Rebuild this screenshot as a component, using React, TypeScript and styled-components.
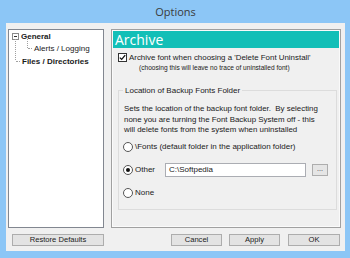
import React from 'react'
import styled, { createGlobalStyle } from 'styled-components'

const Global = createGlobalStyle`
  html, body { margin: 0; padding: 0; }
  body { font-family: "Liberation Sans", Arial, sans-serif; color: #1a1a1a; }
`

const Window = styled.div`
  width: 350px;
  height: 258px;
  box-sizing: border-box;
  background: #8cc6f6;
  padding: 0 5px 7px 6px;
  display: flex;
  flex-direction: column;
`

const TitleBar = styled.div`
  height: 22px;
  display: flex;
  align-items: center;
  justify-content: center;
  font-family: "Open Sans", "Liberation Sans", sans-serif;
  font-size: 11px;
  color: #3a3a3a;
  padding-bottom: 1px;
`

const Client = styled.div`
  flex: 1;
  background: #f0f0f0;
  padding: 6px 4px 0 2px;
  display: flex;
  flex-direction: column;
`

const Main = styled.div`
  display: flex;
  gap: 7px;
  height: 199px;
`

const Tree = styled.div`
  width: 96px;
  box-sizing: border-box;
  background: #fff;
  border: 1px solid #828790;
  padding: 0 0 0 3px;
  position: relative;
`

const TreeRow = styled.div<{ $indent: number; $bold?: boolean }>`
  display: flex;
  align-items: center;
  height: 12.5px;
  padding-left: ${p => p.$indent}px;
  font-size: 8px;
  font-weight: ${p => (p.$bold ? 700 : 400)};
  white-space: nowrap;
  &:first-of-type {
    margin-top: -1px;
  }
`

const Expander = styled.span`
  width: 7px;
  height: 7px;
  box-sizing: border-box;
  border: 1px solid #8a8a8a;
  margin-right: 2px;
  display: flex;
  align-items: center;
  justify-content: center;
  &::after {
    content: '';
    width: 3px;
    height: 1px;
    background: #333;
  }
`

const Connector = styled.span<{ $w: number }>`
  width: ${p => p.$w}px;
  height: 0;
  border-top: 1px dotted #a0a0a0;
  margin-right: 2px;
  flex: none;
`

const TreeLine = styled.div`
  position: absolute;
  left: 6px;
  top: 8.5px;
  height: 21px;
  border-left: 1px dotted #a0a0a0;
`

const SubLine = styled.div`
  position: absolute;
  left: 18px;
  top: 9px;
  height: 9px;
  border-left: 1px dotted #a0a0a0;
`

const Panel = styled.div`
  width: 230px;
  box-sizing: border-box;
  border: 1px solid #a0a0a0;
  box-shadow: inset 0 0 0 1px #fafafa;
  display: flex;
  flex-direction: column;
`

const Header = styled.div`
  height: 17px;
  margin: 1px 1px 0 1px;
  background: #12bfb7;
  color: #fff;
  font-family: "Open Sans", "Liberation Sans", sans-serif;
  font-size: 14px;
  line-height: 17px;
  padding-left: 2px;
`

const Body = styled.div`
  padding: 4px 3px 0 6px;
  display: flex;
  flex-direction: column;
`

const CheckRow = styled.div`
  display: flex;
  align-items: center;
  gap: 2px;
  font-size: 7.9px;
  height: 11px;
`

const Box = styled.span`
  width: 9px;
  height: 9px;
  box-sizing: border-box;
  border: 1px solid #333;
  background: #fff;
  display: flex;
  align-items: center;
  justify-content: center;
`

const Note = styled.div`
  font-size: 6.6px;
  padding-left: 21px;
  margin-top: 1px;
`

const Group = styled.fieldset`
  margin: 15px 0 0 0;
  padding: 9px 6px 14px 5px;
  border: 1px solid #dcdcdc;
  border-radius: 0;
  height: 124px;
  box-sizing: border-box;
`

const Legend = styled.legend`
  font-size: 8px;
  padding: 0 2px;
  margin-left: -1px;
`

const Desc = styled.div`
  font-size: 7.9px;
  line-height: 10.5px;
`

const Options = styled.div`
  display: flex;
  flex-direction: column;
  gap: 9px;
  margin-top: 4px;
`

const RadioRow = styled.div`
  display: flex;
  align-items: center;
  height: 14px;
  font-size: 8px;
`

const Radio = styled.span<{ $on?: boolean }>`
  width: 10px;
  height: 10px;
  box-sizing: border-box;
  border: 1px solid #555;
  border-radius: 50%;
  background: #fff;
  margin: 0 2px 0 -1px;
  flex: none;
  display: flex;
  align-items: center;
  justify-content: center;
  &::after {
    content: '';
    width: 4px;
    height: 4px;
    border-radius: 50%;
    background: ${p => (p.$on ? '#111' : 'transparent')};
  }
`

const OtherLabel = styled.span`
  width: 30px;
`

const PathInput = styled.div`
  width: 141px;
  height: 14px;
  box-sizing: border-box;
  border: 1px solid #abadb3;
  background: #fff;
  font-size: 8px;
  line-height: 12px;
  padding-left: 3px;
`

const Browse = styled.div`
  width: 16px;
  height: 12px;
  box-sizing: border-box;
  margin-left: 6px;
  border: 1px solid #adadad;
  background: #e5e5e5;
  font-size: 7px;
  line-height: 8px;
  text-align: center;
  color: #333;
`

const Footer = styled.div`
  display: flex;
  align-items: flex-start;
  margin-top: 6px;
  padding-left: 4px;
`

const Btn = styled.div<{ $w: number; $ml?: number }>`
  width: ${p => p.$w}px;
  height: 12px;
  margin-left: ${p => p.$ml ?? 0}px;
  box-sizing: border-box;
  border: 1px solid #adadad;
  background: #e3e3e3;
  font-size: 7.6px;
  line-height: 10px;
  text-align: center;
  color: #1a1a1a;
`

export default function App() {
  return (
    <>
      <Global />
      <Window>
        <TitleBar>Options</TitleBar>
        <Client>
          <Main>
            <Tree>
              <TreeLine />
              <SubLine />
              <TreeRow $indent={0} $bold>
                <Expander />
                General
              </TreeRow>
              <TreeRow $indent={16}>
                <Connector $w={4} />
                Alerts / Logging
              </TreeRow>
              <TreeRow $indent={4} $bold>
                <Connector $w={4} />
                Files / Directories
              </TreeRow>
            </Tree>
            <Panel>
              <Header>Archive</Header>
              <Body>
                <CheckRow>
                  <Box>
                    <svg width="7" height="7" viewBox="0 0 7 7">
                      <path d="M0.8 3.6 L2.7 5.4 L6.2 1.2" stroke="#111" strokeWidth="1.3" fill="none" />
                    </svg>
                  </Box>
                  Archive font when choosing a 'Delete Font Uninstall'
                </CheckRow>
                <Note>(choosing this will leave no trace of uninstalled font)</Note>
                <Group>
                  <Legend>Location of Backup Fonts Folder</Legend>
                  <Desc>
                    Sets the location of the backup font folder.&nbsp; By selecting
                    <br />
                    none you are turning the Font Backup System off - this
                    <br />
                    will delete fonts from the system when uninstalled
                  </Desc>
                  <Options>
                    <RadioRow>
                      <Radio />
                      \Fonts (default folder in the application folder)
                    </RadioRow>
                    <RadioRow>
                      <Radio $on />
                      <OtherLabel>Other</OtherLabel>
                      <PathInput>C:\Softpedia</PathInput>
                      <Browse>...</Browse>
                    </RadioRow>
                    <RadioRow>
                      <Radio />
                      None
                    </RadioRow>
                  </Options>
                </Group>
              </Body>
            </Panel>
          </Main>
          <Footer>
            <Btn $w={92}>Restore Defaults</Btn>
            <Btn $w={51} $ml={67}>Cancel</Btn>
            <Btn $w={51} $ml={7}>Apply</Btn>
            <Btn $w={52} $ml={8}>OK</Btn>
          </Footer>
        </Client>
      </Window>
    </>
  )
}
